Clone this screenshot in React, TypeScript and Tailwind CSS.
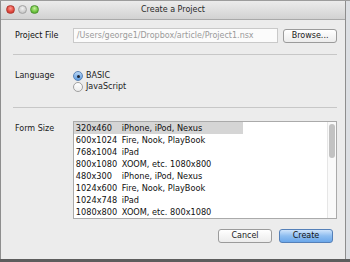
import React from "react";

const rows: [string, string][] = [
  ["320x460", "iPhone, iPod, Nexus"],
  ["600x1024", "Fire, Nook, PlayBook"],
  ["768x1004", "iPad"],
  ["800x1080", "XOOM, etc. 1080x800"],
  ["480x300", "iPhone, iPod, Nexus"],
  ["1024x600", "Fire, Nook, PlayBook"],
  ["1024x748", "iPad"],
  ["1080x800", "XOOM, etc. 800x1080"],
];

function Light({ color }: { color: "red" | "gray" | "green" }) {
  const cls =
    color === "red"
      ? "bg-[radial-gradient(circle_at_50%_35%,#ff9a90,#e0443a_60%,#b8332b)] border-[#b23a32]"
      : color === "green"
      ? "bg-[radial-gradient(circle_at_50%_35%,#c8f0a0,#6cc43c_60%,#4d9a2a)] border-[#4e9532]"
      : "bg-[radial-gradient(circle_at_50%_35%,#f2f2f2,#cfcfcf_60%,#b5b5b5)] border-[#a3a3a3]";
  return <div className={`w-[9px] h-[9px] rounded-full border ${cls}`} />;
}

export default function App() {
  return (
    <div
      className="w-[350px] h-[262px] flex flex-col overflow-hidden bg-[#5d5d5d] text-[#1a1a1a]"
      style={{ fontFamily: '"DejaVu Sans", sans-serif' }}
    >
      <div className="h-[1px] bg-[#9c9c9c] shrink-0" />
      <div className="flex h-[258px] shrink-0">
        <div className="w-[346px] flex flex-col bg-[#ececec] border-l border-r border-[#8e8e8e]">
          {/* title bar */}
          <div className="h-[19px] shrink-0 grid grid-cols-[1fr_auto_1fr] items-center bg-gradient-to-b from-[#ececec] to-[#d2d2d2] border-b border-[#a9a9a9]">
            <div className="flex items-center gap-[3px] pl-[5px] -mt-[2px]">
              <Light color="red" />
              <Light color="gray" />
              <Light color="green" />
            </div>
            <div className="text-[8px] text-[#2a2a2a] leading-none">Create a Project</div>
            <div />
          </div>

          {/* content */}
          <div className="flex flex-col pl-[12px] pr-[8px] pt-[8px]">
            {/* project file */}
            <div className="flex items-center h-[15px]">
              <div className="w-[60px] pl-[2px] text-[8px] font-medium text-[#111]">Project File</div>
              <div className="w-[206px] h-[15px] flex items-center bg-[#fbfbfb] border border-[#c9c9c9] pl-[3px] text-[8px] text-[#9a9a9a] whitespace-nowrap overflow-hidden">
                /Users/george1/Dropbox/article/Project1.nsx
              </div>
              <div className="ml-[5px] w-[54px] h-[14px] flex items-center justify-center rounded-[3px] border border-[#9b9b9b] bg-gradient-to-b from-[#ffffff] to-[#ececec] text-[8px] text-[#222]">
                Browse...
              </div>
            </div>

            <div className="mt-[11px] h-[1px] bg-[#c7c7c7]" />

            {/* language */}
            <div className="flex mt-[16px]">
              <div className="w-[60px] pl-[2px] text-[8px] leading-[10px] text-[#222]">Language</div>
              <div className="flex flex-col gap-[1px]">
                <div className="flex items-center gap-[3px] h-[10px]">
                  <div className="w-[10px] h-[10px] rounded-full border border-[#5b84b6] bg-gradient-to-b from-[#b9d6f4] to-[#5d9be0] flex items-center justify-center">
                    <div className="w-[3px] h-[3px] rounded-full bg-[#1d2330]" />
                  </div>
                  <span className="text-[8px] text-[#222]">BASIC</span>
                </div>
                <div className="flex items-center gap-[3px] h-[10px]">
                  <div className="w-[10px] h-[10px] rounded-full border border-[#a0a0a0] bg-gradient-to-b from-[#ffffff] to-[#ececec]" />
                  <span className="text-[8px] text-[#222]">JavaScript</span>
                </div>
              </div>
            </div>

            <div className="mt-[15px] h-[1px] bg-[#c7c7c7]" />

            {/* form size */}
            <div className="flex mt-[13px]">
              <div className="w-[60px] pl-[2px] pt-[2px] text-[8px] text-[#222]">Form Size</div>
              <div className="w-[265px] h-[98px] bg-white border border-[#aaaaaa] flex">
                <div className="flex-1 flex flex-col">
                  {rows.map(([a, b], i) => (
                    <div key={i} className="h-[12px] flex items-center text-[8.2px] text-[#111]">
                      <div className={`flex items-center h-full pl-[2px] ${i === 0 ? "bg-[#d5d5d5] w-[169px]" : ""}`}>
                        <span className="w-[46px]">{a}</span>
                        <span className="whitespace-nowrap">{b}</span>
                      </div>
                    </div>
                  ))}
                </div>
                <div className="w-[9px] border-l border-[#e6e6e6] bg-[#fafafa] flex justify-center pt-[2px]">
                  <div className="w-[6px] h-[34px] rounded-full bg-[#c2c2c2]" />
                </div>
              </div>
            </div>

            {/* buttons */}
            <div className="flex justify-end gap-[7px] mt-[10px] pr-[4px]">
              <div className="w-[54px] h-[14px] flex items-center justify-center rounded-[3px] border border-[#9b9b9b] bg-gradient-to-b from-[#ffffff] to-[#ececec] text-[8px] text-[#222]">
                Cancel
              </div>
              <div className="w-[54px] h-[14px] flex items-center justify-center rounded-[3px] border border-[#5580b8] bg-gradient-to-b from-[#cfe4fb] via-[#8dbdf0] to-[#6aa7ea] text-[8px] text-[#111]">
                Create
              </div>
            </div>
          </div>
        </div>
        <div className="flex-1 bg-[#dcdfe3]" />
      </div>
      <div className="flex-1 bg-[#5d5d5d]" />
    </div>
  );
}
